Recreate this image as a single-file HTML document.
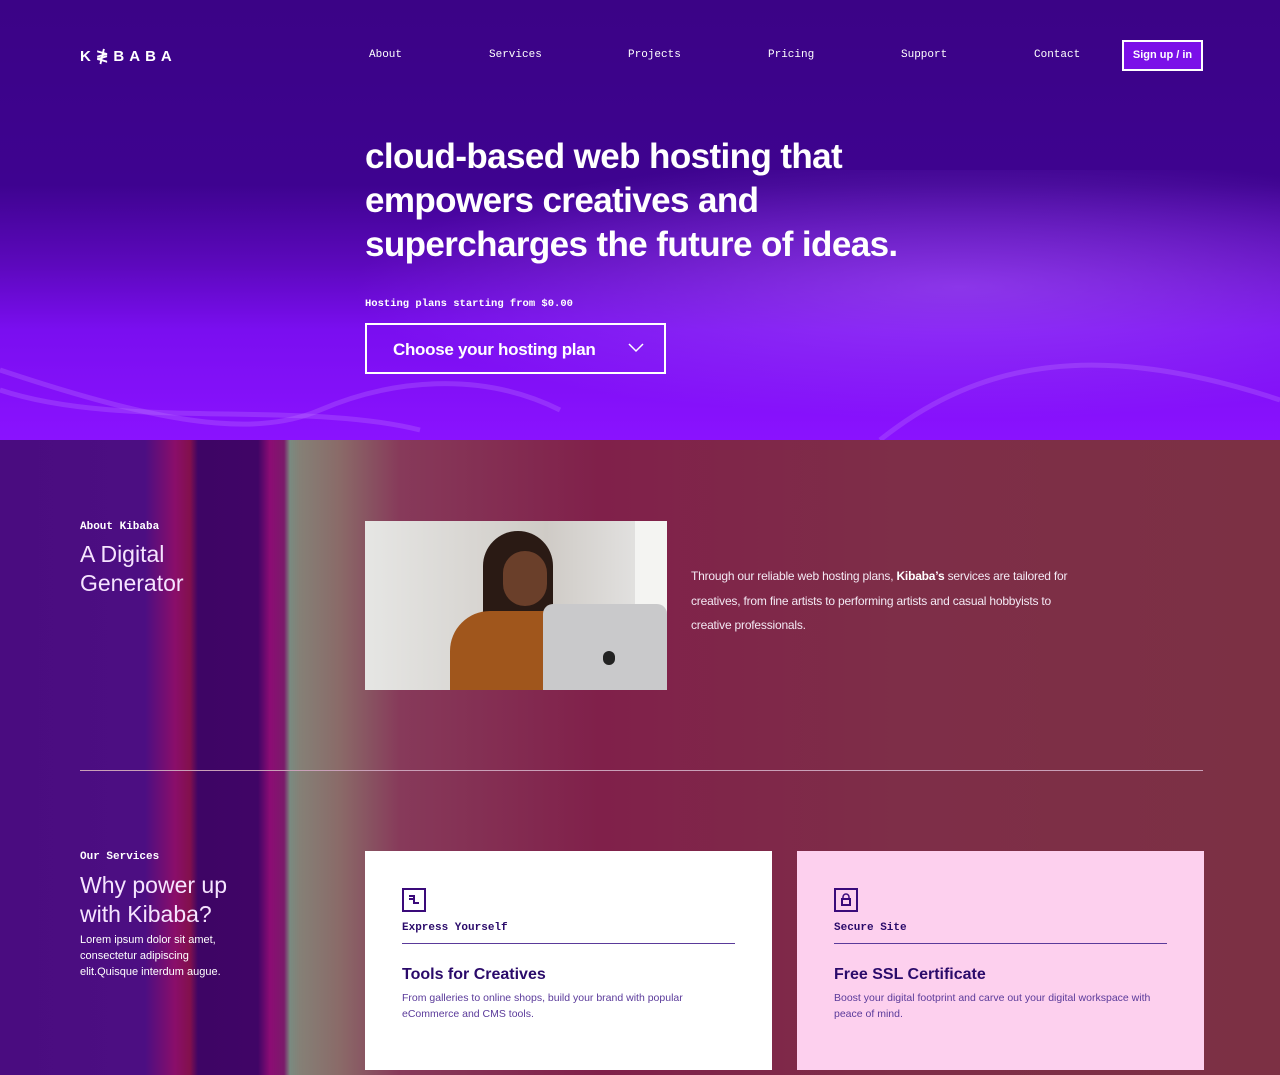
<!DOCTYPE html>
<html><head><style>
*{margin:0;padding:0;box-sizing:border-box}
body{width:1280px;height:1075px;overflow:hidden;font-family:"Liberation Sans",sans-serif;color:#fff;background:#7a2c45}
.hero{position:absolute;left:0;top:0;width:1280px;height:440px;background:linear-gradient(180deg,#3b0386 0%,#3e0390 42%,#5c08bc 60%,#7a0ef0 75%,#8a12ff 100%);overflow:hidden}
.glow{position:absolute;left:300px;top:170px;width:1200px;height:260px;background:radial-gradient(ellipse at 55% 45%,rgba(170,90,255,.55),rgba(140,20,255,0) 65%)}
.mono{font-family:"Liberation Mono",monospace}
.nav a{position:absolute;top:49px;font-size:11px;font-family:"Liberation Mono",monospace;color:#fff;text-decoration:none}
.logo{position:absolute;left:80px;top:47px;font-size:15px;font-weight:bold;letter-spacing:5px}
.btn{position:absolute;left:1122px;top:40px;width:81px;height:31px;border:2px solid #fff;font-size:11px;font-weight:bold;text-align:center;line-height:27px;background:#7b10e8}
h1{position:absolute;left:365px;top:135px;font-size:35px;line-height:44px;font-weight:bold;width:620px;letter-spacing:-0.6px}
.choose{position:absolute;left:365px;top:323px;width:301px;height:51px;border:2px solid #fff;font-size:17px;font-weight:bold;padding:15px 0 0 26px;letter-spacing:-0.3px}
.low{position:absolute;left:0;top:440px;width:1280px;height:635px;background:linear-gradient(90deg,#4a0c80 0,#4c0e82 145px,#8a0e6a 175px,#82104c 190px,#3e0565 198px,#400566 258px,#8c0c74 270px,#7a1a6a 284px,#7a8a80 290px,#858076 300px,#8a6a68 340px,#873a5a 400px,#80204a 600px,#7e2e48 900px,#7c3044 1280px)}
.photo{position:absolute;left:365px;top:521px;width:302px;height:169px;background:linear-gradient(90deg,#e6e6e4,#cfcbc6 60%,#e8e8e8);overflow:hidden}
.card{position:absolute;top:851px;width:407px;height:219px;padding:0 37px}
.card .ic{position:absolute;left:37px;top:37px;width:24px;height:24px;border:2px solid #3a0a7a}
.card .lab{position:absolute;left:37px;top:71px;font-size:11px;font-weight:bold;color:#2a0a6a;font-family:"Liberation Mono",monospace}
.card .hr{position:absolute;left:37px;right:37px;top:92px;height:1px;background:#5a3a9a}
.card h3{position:absolute;left:37px;top:115px;font-size:16px;color:#2a0a6a}
.card p{position:absolute;left:37px;top:139px;width:335px;font-size:10.5px;line-height:16px;color:#5a3a9a}
</style></head><body>
<div class="hero">
<div class="glow"></div>
<svg style="position:absolute;left:0;top:0" width="1280" height="440"><g fill="none" stroke="rgba(190,120,255,.3)" stroke-width="5"><path d="M0 370 C150 420 250 440 320 410 S480 370 560 410"/><path d="M880 440 C980 360 1100 340 1280 400"/><path d="M0 390 C120 430 300 400 420 430"/></g></svg>
<div class="logo">K≹BABA</div>
<div class="nav"><a style="left:369px">About</a><a style="left:489px">Services</a><a style="left:628px">Projects</a><a style="left:768px">Pricing</a><a style="left:901px">Support</a><a style="left:1034px">Contact</a></div>
<div class="btn">Sign up / in</div>
<h1>cloud-based web hosting that empowers creatives and supercharges the future of ideas.</h1>
<div class="mono" style="position:absolute;left:365px;top:298px;font-size:10.5px;font-weight:bold">Hosting plans starting from $0.00</div>
<div class="choose">Choose your hosting plan<svg style="position:absolute;right:20px;top:18px" width="16" height="10"><path d="M1 1 L8 8 L15 1" stroke="#fff" stroke-width="1.5" fill="none"/></svg></div>
</div>
<div class="low">
<div class="mono" style="position:absolute;left:80px;top:81px;font-size:11px;font-weight:bold">About Kibaba</div>
<div style="position:absolute;left:80px;top:100px;font-size:23px;line-height:29px;color:#f6e4ff">A Digital<br>Generator</div>
<div style="position:absolute;left:691px;top:124px;width:400px;font-size:12px;line-height:24.5px;color:#f3e8f3;letter-spacing:-0.2px">Through our reliable web hosting plans, <b style="color:#fff">Kibaba’s</b> services are tailored for creatives, from fine artists to performing artists and casual hobbyists to creative professionals.</div>
<div style="position:absolute;left:80px;top:330px;width:1123px;height:1px;background:#c9a0b8"></div>
<div class="mono" style="position:absolute;left:80px;top:411px;font-size:11px;font-weight:bold">Our Services</div>
<div style="position:absolute;left:80px;top:431px;font-size:23px;line-height:29px;color:#f6e4ff">Why power up<br>with Kibaba?</div>
<div style="position:absolute;left:80px;top:492px;width:150px;font-size:11px;line-height:16px">Lorem ipsum dolor sit amet, consectetur adipiscing elit.Quisque interdum augue.</div>
</div>
<div class="photo">
<div style="position:absolute;left:270px;top:0;width:32px;height:90px;background:#f4f4f2"></div>
<div style="position:absolute;left:118px;top:10px;width:70px;height:120px;border-radius:40px 40px 10px 10px;background:#2a1a14"></div>
<div style="position:absolute;left:138px;top:30px;width:44px;height:55px;border-radius:22px;background:#6a3f2a"></div>
<div style="position:absolute;left:85px;top:90px;width:140px;height:90px;border-radius:40px 40px 0 0;background:#a0561c"></div>
<div style="position:absolute;left:178px;top:83px;width:124px;height:90px;border-radius:10px 10px 0 0;background:#c9c9cb"></div>
<div style="position:absolute;left:238px;top:130px;width:12px;height:14px;border-radius:6px;background:#222"></div>
</div>
<div class="card" style="left:365px;background:#fff">
<div class="ic"><svg width="20" height="20"><path d="M5 6 H10 V13 H15 M5 9 H9" stroke="#3a0a7a" stroke-width="2" fill="none"/></svg></div>
<div class="lab">Express Yourself</div><div class="hr"></div>
<h3>Tools for Creatives</h3>
<p>From galleries to online shops, build your brand with popular eCommerce and CMS tools.</p>
</div>
<div class="card" style="left:797px;background:#fdd0ee">
<div class="ic"><svg width="20" height="20"><rect x="6" y="9" width="8" height="6" fill="none" stroke="#3a0a7a" stroke-width="2"/><path d="M7 9 V7 A3 3 0 0 1 13 7 V9" stroke="#3a0a7a" stroke-width="1.5" fill="none"/></svg></div>
<div class="lab">Secure Site</div><div class="hr"></div>
<h3>Free SSL Certificate</h3>
<p>Boost your digital footprint and carve out your digital workspace with peace of mind.</p>
</div>
</body></html>
